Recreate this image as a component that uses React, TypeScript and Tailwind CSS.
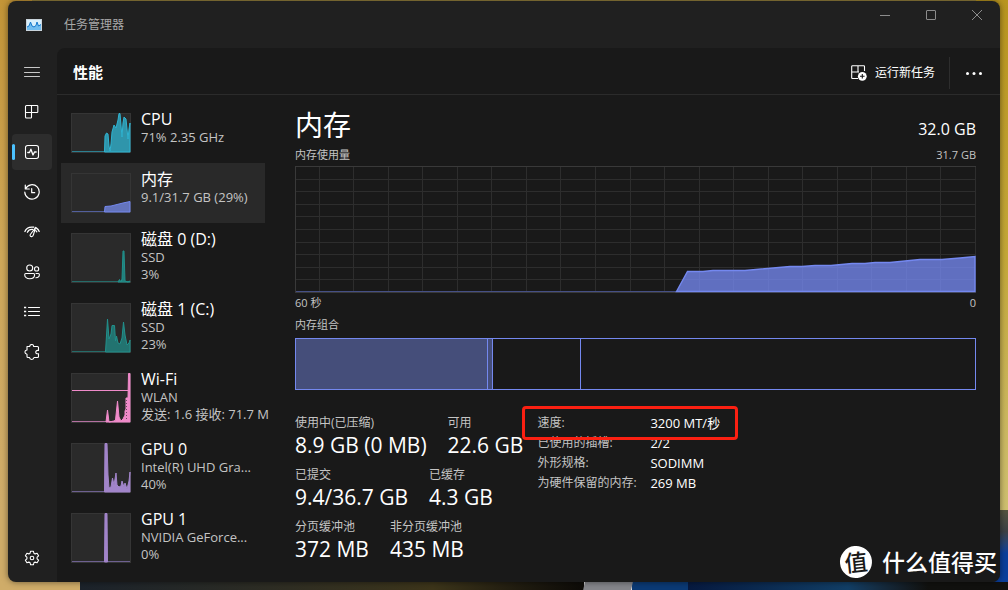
import React from 'react';
import { clsx } from 'clsx';

interface Device {
    name: string;
    lines: string[];
    height: number;
    stroke: string;
    fill: string;
    base: string;
    points: string;
    marker?: boolean;
}

const devices: Device[] = [
    {
        name: 'CPU',
        lines: ['71% 2.35 GHz'],
        height: 40,
        stroke: '#2fb4d2',
        fill: '#2f95ab',
        base: '#2c7f90',
        points: '33.5,39 34,23 35.5,20 37,21 38,33 39,38 40,31 41,19 43,12 45,15 47,7 48,0.5 49,0.5 51,24 52,10 53,4 55,6 57,26 58,16 59,10 59,39'
    },
    {
        name: '内存',
        lines: ['9.1/31.7 GB (29%)'],
        height: 40,
        stroke: '#7488ef',
        fill: '#6474bd',
        base: '#525f9c',
        points: '33.5,39 34,33.5 40,33 46,31.5 52,30 59,28.5 59,39'
    },
    {
        name: '磁盘 0 (D:)',
        lines: ['SSD', '3%'],
        height: 50,
        stroke: '#21918c',
        fill: '#22807c',
        base: '#256b68',
        points: '47,49 48.5,46.5 50,49 51,46 52,18 53,18 54,48 57,49 58.5,48 59,49'
    },
    {
        name: '磁盘 1 (C:)',
        lines: ['SSD', '23%'],
        height: 50,
        stroke: '#21918c',
        fill: '#227370',
        base: '#256b68',
        points: '34.5,49 36.5,16 38,36 40,31 41,22.5 43.5,22.5 44.5,38 45.5,33 47,40 49,41 51,35 52.5,19 54,32 56,42 58,40 59,37 59,49'
    },
    {
        name: 'Wi-Fi',
        lines: ['WLAN', '发送: 1.6 接收: 71.7 M'],
        height: 50,
        stroke: '#ef8ac9',
        fill: '#ef8ac9',
        base: '#b370a0',
        points: '35,49 36.5,37 38,49 43,48 44.5,47 46.5,28 48,44 50,48 52,46 54,42 54,38 55,36 55,25 57,25 57.5,0.5 59,0.5 59,49',
        marker: true
    },
    {
        name: 'GPU 0',
        lines: ['Intel(R) UHD Gra...', '40%'],
        height: 50,
        stroke: '#a184c9',
        fill: '#a184c9',
        base: '#6d6090',
        points: '33.5,49 34,0.5 36,0.5 37,32 38,45 40,44 41.5,35 43,42 45,30 46,42 48,44 50,43 51,38 53,44 54,40 56,46 58,38 59,29 59,49'
    },
    {
        name: 'GPU 1',
        lines: ['NVIDIA GeForce...', '0%'],
        height: 50,
        stroke: '#a184c9',
        fill: '#a184c9',
        base: '#6d6090',
        points: '33.5,49 34,0.5 36,0.5 36.5,49'
    }
];

const statRows = [
    [
        { label: '使用中(已压缩)', value: '8.9 GB (0 MB)' },
        { label: '可用', value: '22.6 GB' }
    ],
    [
        { label: '已提交', value: '9.4/36.7 GB' },
        { label: '已缓存', value: '4.3 GB' }
    ],
    [
        { label: '分页缓冲池', value: '372 MB' },
        { label: '非分页缓冲池', value: '435 MB' }
    ]
];

const hardware = [
    { label: '速度:', value: '3200 MT/秒' },
    { label: '已使用的插槽:', value: '2/2' },
    { label: '外形规格:', value: 'SODIMM' },
    { label: '为硬件保留的内存:', value: '269 MB' }
];

const Icon = ({ children }: { children: React.ReactNode }) => (
    <svg className="h-4 w-4" viewBox="0 0 16 16" fill="none" stroke="currentColor" strokeWidth="1.1" strokeLinecap="round" strokeLinejoin="round" aria-hidden="true">
        {children}
    </svg>
);

const navItems = [
    {
        label: '进程',
        icon: (
            <Icon>
                <path d="M2.500 1.500H13a.8.8 0 0 1 .8.8v5.400a.8.8 0 0 1-.8.8H1.500v-6a1 1 0 0 1 1-1zM1.500 8.500V13a1 1 0 0 0 1 1h4.200a.8.8 0 0 0 .8-.8V1.500" />
            </Icon>
        )
    },
    {
        label: '性能',
        icon: (
            <Icon>
                <rect x="1.5" y="1.5" width="13" height="13" rx="2.2" />
                <path d="M3.8 8.5h1.7l1.4-3.3L9 11l1.5-3h1.7" strokeWidth="1.3" />
            </Icon>
        )
    },
    {
        label: '应用历史记录',
        icon: (
            <Icon>
                <path d="M1.3 1v4h4M1.5 4.8A7.2 7.2 0 1 1 .8 8.2M7.7 4.5v4.2h3" strokeWidth="1.2" />
            </Icon>
        )
    },
    {
        label: '启动应用',
        icon: (
            <Icon>
                <path d="M.9 7.5C2.3 3.8 5.2 2.500 9.8 3.2M3.400 8.2C4.600 5.900 6.200 5.200 8.500 5.400M12.200 3.900C13.700 4.800 14.700 6 15.200 7.500M11.800 6.600l1 1.200" strokeWidth="1.3" />
                <path d="M11.700 3.300 6.300 10.500c-.7 1.200.3 2.600 1.800 2 1-.3 1.200-1.200 1.400-2z" />
            </Icon>
        )
    },
    {
        label: '用户',
        icon: (
            <Icon>
                <circle cx="5.7" cy="4" r="3" />
                <circle cx="12.6" cy="4.9" r="2.1" />
                <path d="M1.8 9.5h7.6c.7 0 1.2.5 1.2 1.2 0 2.5-2 4-4.9 4s-5-1.5-5-4c0-.7.4-1.2 1.1-1.2zM12 9.5h2.3c.7 0 1.1.5 1.1 1.1 0 2-1.5 3.2-3.5 3.2" />
            </Icon>
        )
    },
    {
        label: '详细信息',
        icon: (
            <Icon>
                <path d="M4.500 3.500h11M4.500 7.500h11M4.500 11.500h11" />
                <path d="M.8 3.500h.6M.8 7.500h.6M.8 11.500h.6" strokeWidth="1.6" strokeLinecap="square" />
            </Icon>
        )
    },
    {
        label: '服务',
        icon: (
            <Icon>
                <path d="M3 2.5h2.7a2 2 0 0 1 4 0h3.8a1 1 0 0 1 1 1v3c-3.5-1-3.8 4.1 0 3.2v2.8a1 1 0 0 1-1 1H10c-.3 2.6-4.3 2.6-4.5 0H4a1 1 0 0 1-1-1v-2.3C.2 9.9.2 6.2 3 6z" />
            </Icon>
        )
    }
];

const SettingsIcon = () => (
    <Icon>
        <path d="M6.6 1.2h2.8l.5 2 1.2.7 2-.6 1.5 2.5-1.5 1.4v1.6l1.5 1.4-1.5 2.5-2-.6-1.2.7-.5 2H6.6l-.5-2-1.2-.7-2 .6-1.5-2.5 1.5-1.4V7.2L1.4 5.8l1.500-2.500 2 .6 1.200-.7z" />
        <circle cx="8" cy="8" r="1.8" />
    </Icon>
);

const MiniGraph = ({ device }: { device: Device }) => (
    <svg className="mt-[10px] w-[60px] shrink-0" height={device.height} viewBox={`0 0 60 ${device.height}`} aria-hidden="true">
        <rect x="0.5" y="0.5" width="59" height={device.height - 1} fill="#2a2a2a" stroke="#353535" />
        <path d={`M1 ${device.height - 1.5}H59`} stroke={device.base} />
        <polygon points={device.points} fill={device.fill} stroke={device.stroke} />
        {device.marker && <path d="M1 17.5H59" stroke={device.stroke} />}
        {device.marker && <path d="M55.5 27v20" stroke="#6b4a60" strokeDasharray="1 2" />}
    </svg>
);

const MemoryChart = () => {
    const columns = Array.from({ length: 20 }, (_, i) => Math.round(680 - i * 34.55) + 0.5);
    const rows = Array.from({ length: 9 }, (_, i) => Math.round((i + 1) * 12.6) + 0.5);

    return (
        <svg className="mt-px block h-[127px] w-full" viewBox="0 0 681 127" preserveAspectRatio="none" role="img" aria-label="内存使用量">
            <rect x="0.5" y="0.5" width="680" height="126" fill="none" stroke="#393939" />
            {columns.map((x) => (
                <path key={x} d={`M${x} 1V126`} stroke="#2d2d2d" />
            ))}
            {rows.map((y) => (
                <path key={y} d={`M1 ${y}H680`} stroke="#2d2d2d" />
            ))}
            <path d="M1 125.5H382" stroke="#454f85" />
            <path
                d="M381.5 125.5 392.5 105.5H408L418 104.5H450L495 100.5H507L520 99.5H536L557 97.5H570L580 96.5H595L625 93.5H647L665 92 680 90.5V125.5Z"
                fill="#7488ef"
                fillOpacity="0.78"
                stroke="#7488ef"
                strokeWidth="1.4"
            />
        </svg>
    );
};

const Wallpaper = () => (
    <div className="absolute inset-0 flex flex-col" aria-hidden="true">
        <div className="flex flex-1 justify-between bg-[#95813d]">
            <div className="w-8 bg-linear-to-b from-[#c39537] via-[#cfa859] to-[#d0ad6b]" />
            <div className="w-8 bg-linear-to-b from-[#b9951f] via-[#c4a838] to-[#cfc070]" />
        </div>
        <div className="flex h-[72px]">
            <div className="w-20 bg-[#cfac69]" />
            <div className="flex-1 bg-[#202020]" />
            <div className="w-8 bg-linear-to-b from-[#55543f] via-[#3c4145] via-30% to-[#0b3f9c] to-60%" />
        </div>
        <div className="flex h-2">
            <div className="w-20 bg-[#cfac69]" />
            <div className="flex-1 bg-linear-to-r from-[#1c232b] via-[#3d351a] via-70% to-[#0d0b08]" />
            <div className="w-12 -skew-x-12 bg-[#85868b]" />
            <div className="w-14 bg-[#0b3a75]" />
            <div className="w-80 bg-linear-to-r from-[#071a40] via-[#123f66] via-50% to-[#11110f] to-75%" />
        </div>
    </div>
);

export default function App() {
    return (
        <div className="relative flex min-h-screen flex-col px-2 pt-px pb-2 font-['Open_Sans','Noto_Sans_CJK_SC',sans-serif] text-white">
            <Wallpaper />
            <div className="relative flex flex-1 flex-col overflow-hidden rounded-lg bg-[#202020] shadow-[0_0_6px_rgba(0,0,0,0.5)]">
                <header className="flex h-[47px] items-start justify-between">
                    <div className="flex h-full items-center gap-[22px] pl-[18px] text-xs text-[#a8a8a8]">
                        <svg className="h-3 w-4" viewBox="0 0 16 12" aria-hidden="true">
                            <rect width="16" height="12" fill="#c9d4dc" />
                            <rect x="1" y="1" width="14" height="10" fill="#d8effc" />
                            <path d="M1 8 3 7 4.5 3 6 7 8 8 10 6.5 11 3 12.5 7 15 5.5V11H1z" fill="#71bdf0" />
                            <path d="M1 8 3 7 4.5 3 6 7 8 8 10 6.5 11 3 12.5 7 15 5.5" fill="none" stroke="#1478cc" />
                        </svg>
                        <h1>任务管理器</h1>
                    </div>
                    <div className="flex text-[#8c8c8c]">
                        <button type="button" aria-label="最小化" className="flex h-7 w-[46px] items-center justify-center">
                            <svg className="h-[10px] w-[10px]" viewBox="0 0 10 10" stroke="currentColor"><path d="M0 5.5h10" /></svg>
                        </button>
                        <button type="button" aria-label="最大化" className="flex h-7 w-[46px] items-center justify-center">
                            <svg className="h-[10px] w-[10px]" viewBox="0 0 10 10" fill="none" stroke="currentColor"><rect x="0.5" y="0.5" width="9" height="9" rx="0.5" /></svg>
                        </button>
                        <button type="button" aria-label="关闭" className="flex h-7 w-[46px] items-center justify-center">
                            <svg className="h-[10px] w-[10px]" viewBox="0 0 10 10" stroke="currentColor"><path d="m0 0 10 10M10 0 0 10" /></svg>
                        </button>
                    </div>
                </header>

                <div className="flex flex-1">
                    <nav className="flex w-[49px] shrink-0 flex-col gap-1 py-[6px] pl-1">
                        <button type="button" aria-label="菜单" className="flex h-9 w-10 items-center justify-center text-[#c8c8c8]">
                            <Icon><path d="M.5 3.500h15M.5 8.500h15M.5 12.500h15" strokeWidth="1" /></Icon>
                        </button>
                        {navItems.map((item) => (
                            <button
                                key={item.label}
                                type="button"
                                aria-label={item.label}
                                className={clsx('relative flex h-9 w-10 items-center justify-center rounded', item.label === '性能' && 'bg-[#2d2d2d]')}
                            >
                                {item.label === '性能' && <span className="absolute left-0 h-4 w-[3px] rounded-full bg-[#4cc2ff]" />}
                                {item.icon}
                            </button>
                        ))}
                        <button type="button" aria-label="设置" className="mt-auto flex h-9 w-10 items-center justify-center">
                            <SettingsIcon />
                        </button>
                    </nav>

                    <main className="flex min-w-0 flex-1 flex-col rounded-tl-lg bg-[#191919]">
                        <div className="flex h-[47px] items-center justify-between border-b border-[#2b2b2b] pt-[3px] pl-4">
                            <h2 className="text-[15px] font-bold">性能</h2>
                            <div className="flex items-center">
                                <button type="button" className="flex items-center gap-2 pr-[14px] text-xs">
                                    <svg className="h-4 w-4" viewBox="0 0 16 16" fill="none" stroke="currentColor" strokeWidth="1.1" aria-hidden="true">
                                        <path d="M7 13.5H1.5a.8.8 0 0 1-.8-.8V1.5a.8.8 0 0 1 .8-.8h11.200a.8.8 0 0 1 .8.8V6M.7 7H8M7 .7V7" />
                                        <circle cx="11.300" cy="11.300" r="4.400" fill="currentColor" stroke="none" />
                                        <path d="M11.300 9v4.600M9 11.300h4.600" stroke="#191919" />
                                    </svg>
                                    运行新任务
                                </button>
                                <span className="h-8 w-px bg-[#2d2d2d]" />
                                <button type="button" aria-label="更多" className="flex h-8 w-12 items-center justify-center">
                                    <svg className="h-4 w-4" viewBox="0 0 16 16" fill="currentColor" aria-hidden="true">
                                        <circle cx="1.500" cy="8.500" r="1.500" />
                                        <circle cx="8" cy="8.500" r="1.500" />
                                        <circle cx="14.500" cy="8.500" r="1.500" />
                                    </svg>
                                </button>
                                <span className="w-[2px]" />
                            </div>
                        </div>

                        <div className="flex flex-1">
                            <div className="ml-1 flex w-[204px] shrink-0 flex-col pt-2">
                                {devices.map((device) => (
                                    <button
                                        key={device.name}
                                        type="button"
                                        className={clsx('flex items-start gap-[10px] pb-[10px] pl-[10px] text-left', device.name === '内存' && 'bg-[#292929]')}
                                    >
                                        <MiniGraph device={device} />
                                        <span className="-mb-[10px] flex flex-col pt-[6px] whitespace-nowrap">
                                            <span className="text-base leading-5">{device.name}</span>
                                            {device.lines.map((line) => (
                                                <span key={line} className="text-[13px] leading-[17px] text-[#c4c4c4]">{line}</span>
                                            ))}
                                        </span>
                                    </button>
                                ))}
                            </div>

                            <section className="min-w-0 flex-1 pt-[10px] pr-6 pl-[30px]">
                                <div className="flex items-end justify-between">
                                    <h3 className="text-[28px] leading-10">内存</h3>
                                    <span className="text-base leading-8">32.0 GB</span>
                                </div>
                                <div className="flex h-5 items-center justify-between text-[11px] text-[#c4c4c4]">
                                    <span>内存使用量</span>
                                    <span>31.7 GB</span>
                                </div>
                                <MemoryChart />
                                <div className="flex h-5 items-center justify-between text-[11px] text-[#c4c4c4]">
                                    <span>60 秒</span>
                                    <span>0</span>
                                </div>
                                <p className="pt-[2px] text-[11px] leading-5 text-[#c4c4c4]">内存组合</p>
                                <div className="mt-[3px] flex h-[52px] border border-[#7488ef]">
                                    <div className="w-[28.3%] border-r border-[#7488ef] bg-[#454e7a]" />
                                    <div className="w-[5px] border-r border-[#7488ef] bg-[#454e7a]" />
                                    <div className="w-[13%] border-r border-[#7488ef]" />
                                </div>

                                <div className="flex gap-[14px] pt-[23px]">
                                    <div className="flex shrink-0 flex-col gap-2 pt-px">
                                        {statRows.map((row) => (
                                            <dl key={row[0].label} className="flex gap-[21px]">
                                                {row.map((stat) => (
                                                    <div key={stat.label}>
                                                        <dt className="text-xs leading-[18px] text-[#c4c4c4]">{stat.label}</dt>
                                                        <dd className="text-[21px] leading-[26px]">{stat.value}</dd>
                                                    </div>
                                                ))}
                                            </dl>
                                        ))}
                                    </div>
                                    <div className="relative">
                                        <table className="text-left">
                                            <tbody>
                                                {hardware.map((item) => (
                                                    <tr key={item.label} className="h-5">
                                                        <th scope="row" className="w-[113px] p-0 text-xs font-normal whitespace-nowrap text-[#c4c4c4]">{item.label}</th>
                                                        <td className="p-0 text-[13px] leading-5 whitespace-nowrap">{item.value}</td>
                                                    </tr>
                                                ))}
                                            </tbody>
                                        </table>
                                        <div className="absolute -top-[7px] -left-[15px] h-[34px] w-[216px] rounded border-3 border-[#fb2012]" />
                                    </div>
                                </div>
                            </section>
                        </div>
                    </main>
                </div>
            </div>

            <div className="absolute right-[11px] bottom-3 flex items-center gap-[10px]">
                <span className="flex h-8 w-8 -rotate-6 items-center justify-center rounded-full bg-white text-[23px] leading-none font-medium text-[#191919]">值</span>
                <span className="text-[23px] leading-8 font-medium">什么值得买</span>
            </div>
        </div>
    );
}
